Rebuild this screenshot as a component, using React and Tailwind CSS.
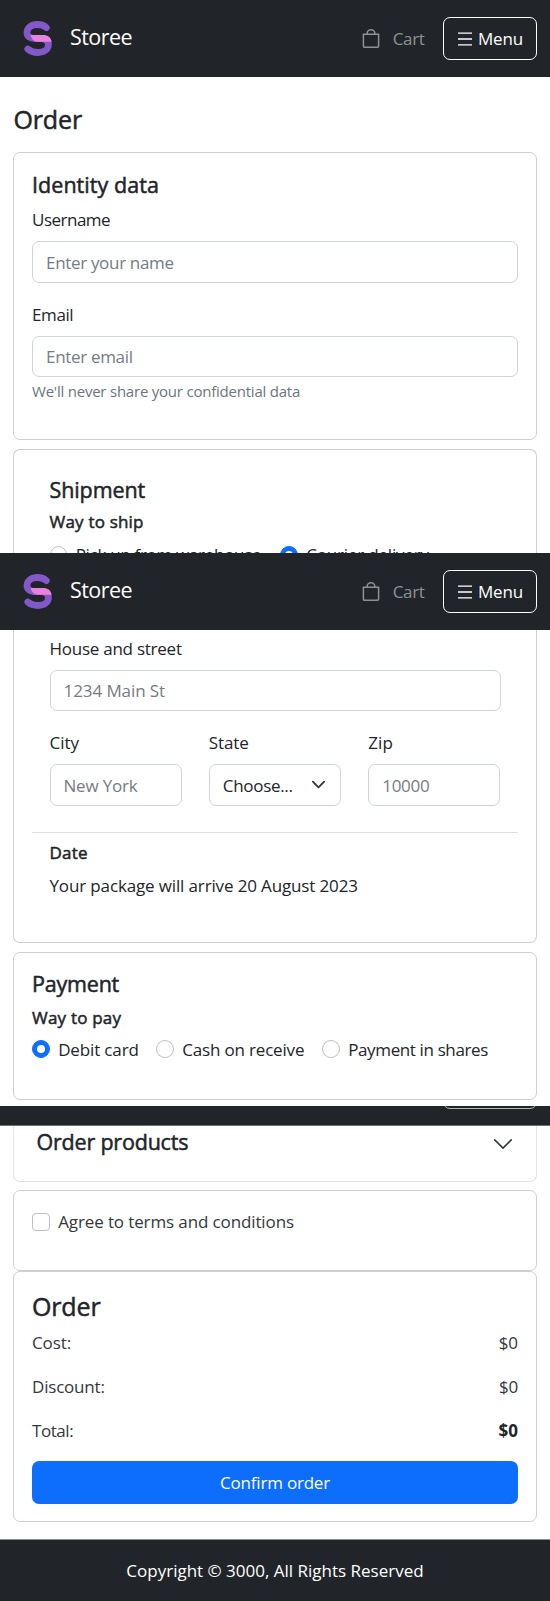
function Logo() {
  return (
    <svg className="h-[36px] w-[30px] shrink-0" viewBox="23 21 30 36" fill="none">
      <path
        d="M46.3 27.6C44 25.4 41 24.5 37.5 24.5C31 24.5 27 28 27 32.5C27 36.5 30 38.5 35 38.5L41 38.5C46 38.5 48.4 41 48.4 44.5C48.4 49.5 44 52.5 38 52.5C33.5 52.5 30.5 51.5 27.8 49"
        stroke="#8358c8"
        strokeWidth="6.8"
        strokeLinecap="round"
      />
      <path d="M30.8 35H43C48 35 51 37.6 51.6 41.8H38C34 41.8 31.2 39 30.8 35Z" fill="#e882dc" />
    </svg>
  );
}

function Header() {
  return (
    <header className="flex h-[77px] shrink-0 items-center bg-[#212529] pr-[13px] pl-[23px]">
      <Logo />
      <span className="mb-[3px] ml-[17px] text-[21.5px] leading-[26px] tracking-[-0.55px] text-white">Storee</span>
      <div className="ml-auto flex items-center">
        <svg className="h-[19px] w-[18px]" viewBox="0 0 18 19" fill="none" stroke="#8f9193" strokeWidth="1.5">
          <path d="M1.4 5.3H16.6V17C16.6 17.8 16.2 18.2 15.4 18.2H2.6C1.8 18.2 1.4 17.8 1.4 17Z" />
          <path d="M5.2 5V4.2A3.8 3.4 0 0 1 12.8 4.2V5" />
        </svg>
        <span className="ml-[13px] text-[17px] leading-[26px] tracking-[-0.3px] text-[#8f9193]">Cart</span>
        <button className="ml-[18.4px] flex h-[43px] w-[94px] items-center rounded-[7px] border border-white pl-[14px] text-[17px] leading-[26px] tracking-[-0.2px] text-white">
          <svg className="mr-[6px] h-[14px] w-[14px]" viewBox="0 0 14 14" stroke="#ffffff" strokeWidth="1.3">
            <path d="M0 1.2H14M0 7H14M0 12.8H14" />
          </svg>
          Menu
        </button>
      </div>
    </header>
  );
}

function Radio({ label, checked, className, labelClass = "pt-[1px] -mb-[1px]" }) {
  return (
    <label className={"flex items-center " + className}>
      <span
        className={
          "mr-[8.6px] flex h-[18px] w-[17.6px] shrink-0 items-center justify-center rounded-full border " +
          (checked ? "border-[#0d6efd] bg-[#0d6efd]" : "border-[#bfbfbf] bg-white")
        }
      >
        {checked && <span className="h-[8px] w-[8px] rounded-full bg-white" />}
      </span>
      <span className={"whitespace-nowrap " + labelClass}>{label}</span>
    </label>
  );
}

const strong = "[-webkit-text-stroke:0.5px_currentColor] ";

function Heading({ className, children }) {
  return <h3 className={strong + "text-[21.5px] leading-[26px] " + className}>{children}</h3>;
}

function Sub({ className, children }) {
  return <h4 className={strong + "leading-[26px] tracking-[0.2px] " + className}>{children}</h4>;
}

const field =
  "block w-full rounded-[7px] border border-[#ced4da] bg-white px-[13px] placeholder:text-[#747c84] placeholder:opacity-100 outline-none ";
const card = "mx-[13px] border-[#cfcfcf] bg-white px-[18px] ";

function Row({ label, value, className }) {
  return (
    <div className={"flex justify-between text-[#34383c] " + className}>
      <span>{label}</span>
      {value}
    </div>
  );
}

export default function App() {
  return (
    <div className="bg-white font-['Open_Sans','Noto_Sans',sans-serif] text-[17px] leading-[26px] tracking-[-0.25px] text-[#212529]">
      <div className="h-[553px] overflow-hidden">
        <Header />
        <h2 className={strong + "mt-[26px] ml-[13.5px] text-[25px] leading-[32px] tracking-[-0.15px]"}>Order</h2>
        <section className={card + "mt-[17px] h-[288px] rounded-[7px] border pt-[19px]"}>
          <Heading className="tracking-[0.05px]">Identity data</Heading>
          <div className="mt-[9px] tracking-[-0.5px]">Username</div>
          <input className={field + "mt-[8px] h-[42px] tracking-[-0.32px]"} placeholder="Enter your name" />
          <div className="mt-[19px] tracking-[-0.4px]">Email</div>
          <input className={field + "mt-[8px] h-[41px] tracking-[-0.32px]"} placeholder="Enter email" />
          <div className="mt-[4px] text-[15px] leading-[20px] tracking-[-0.22px] text-[#6c757d]">
            We'll never share your confidential data
          </div>
        </section>
        <section className={card + "mt-[9px] h-[120px] rounded-t-[7px] border border-b-0 pt-[27px]"}>
          <div className="px-[17.5px]">
            <Heading className="tracking-[-0.1px]">Shipment</Heading>
            <Sub className="mt-[6px]">Way to ship</Sub>
            <div className="mt-[7px] flex">
              <Radio className="w-[230.5px] tracking-[-0.3px]" labelClass="" label="Pick up from warehouse" />
              <Radio className="tracking-[-0.18px]" labelClass="" label="Courier delivery" checked />
            </div>
          </div>
        </section>
      </div>

      <div className="h-[553px] overflow-hidden">
        <Header />
        <section className={card + "h-[313px] rounded-b-[7px] border border-t-0 pt-[6px]"}>
          <div className="px-[17.5px]">
            <div className="tracking-[-0.25px]">House and street</div>
            <input className={field + "mt-[8px] h-[41px] tracking-[-0.08px]"} placeholder="1234 Main St" />
            <div className="mt-[19px] grid grid-cols-3 gap-x-[27px]">
              <div>
                <div className="tracking-[0px]">City</div>
                <input className={field + "mt-[8px] h-[42px] tracking-[-0.2px]"} placeholder="New York" />
              </div>
              <div>
                <div className="tracking-[-0.1px]">State</div>
                <div className={field + "mt-[8px] h-[42px]"}>
                  <div className="flex h-full items-center justify-between pt-[1px] tracking-[-0.32px]">
                    Choose...
                    <svg className="mr-[1px] mb-[2px] h-[15px] w-[15px]" viewBox="0 0 16 16" fill="none" stroke="#343a40" strokeWidth="2" strokeLinecap="round" strokeLinejoin="round">
                      <path d="m2 5 6 6 6-6" />
                    </svg>
                  </div>
                </div>
              </div>
              <div>
                <div className="tracking-[0.2px]">Zip</div>
                <input className={field + "mt-[8px] h-[42px] tracking-[-0.25px]"} placeholder="10000" />
              </div>
            </div>
          </div>
          <hr className="mt-[26px] h-px border-0 bg-[#dedfdf]" />
          <div className="px-[17.5px]">
            <Sub className="mt-[7px]">Date</Sub>
            <div className="mt-[7px] tracking-[-0.14px]">Your package will arrive 20 August 2023</div>
          </div>
        </section>
        <section className={card + "mt-[9px] h-[148px] rounded-[7px] border pt-[18px]"}>
          <Heading className="tracking-[-0.2px]">Payment</Heading>
          <Sub className="mt-[8px]">Way to pay</Sub>
          <div className="mt-[5px] flex">
            <Radio className="w-[124px] tracking-[-0.15px]" label="Debit card" checked />
            <Radio className="w-[166px] tracking-[-0.17px]" label="Cash on receive" />
            <Radio className="tracking-[-0.37px]" label="Payment in shares" />
          </div>
        </section>
      </div>

      <div className="flex h-[20px] justify-end overflow-hidden border-b border-[#6f7274] bg-[#212529] pr-[13px]">
        <div className="-mt-[40px] h-[43px] w-[94px] rounded-[7px] border border-[#b5b7b8]" />
      </div>
      <section className="mx-[13px] h-[56px] rounded-b-[7px] border border-t-0 border-[#e2e3e3] bg-white pt-[3px] pr-[22px] pl-[22.5px]">
        <div className="flex justify-between">
          <Heading className="tracking-[-0.2px]">Order products</Heading>
          <svg className="mt-[4px] h-[22px] w-[22px]" viewBox="0 0 16 16" fill="none" stroke="#33373b" strokeWidth="1.1" strokeLinecap="round" strokeLinejoin="round">
            <path d="m2 5 6 6 6-6" />
          </svg>
        </div>
      </section>
      <section className={card + "mt-[8px] h-[81px] rounded-[7px] border pt-[18px]"}>
        <label className="flex items-center text-[#34383c]">
          <span className="mr-[8.6px] h-[18px] w-[17.6px] rounded-[4px] border border-[#bfbfbf]" />
          <span className="tracking-[-0.12px]">Agree to terms and conditions</span>
        </label>
      </section>
      <section className={card + "h-[251px] rounded-[7px] border pt-[18px]"}>
        <h2 className={strong + "text-[25px] leading-[32px] tracking-[-0.15px]"}>Order</h2>
        <Row className="mt-[8px] tracking-[-0.1px]" label="Cost:" value={<span>$0</span>} />
        <Row className="mt-[18px] tracking-[-0.2px]" label="Discount:" value={<span>$0</span>} />
        <Row className="mt-[18px] tracking-[-0.45px]" label="Total:" value={<b className="font-bold tracking-[0px] text-[#212529]">$0</b>} />
        <button className="mt-[17px] block h-[43px] w-full rounded-[7px] bg-[#0d6efd] pt-[1px] text-center tracking-[-0.2px] text-white">
          Confirm order
        </button>
      </section>
      <footer className="mt-[17px] h-[62px] border-t border-[#8b8e90] bg-[#212529] pt-[18px] text-center tracking-[0px] text-white">
        Copyright © 3000, All Rights Reserved
      </footer>
    </div>
  );
}
